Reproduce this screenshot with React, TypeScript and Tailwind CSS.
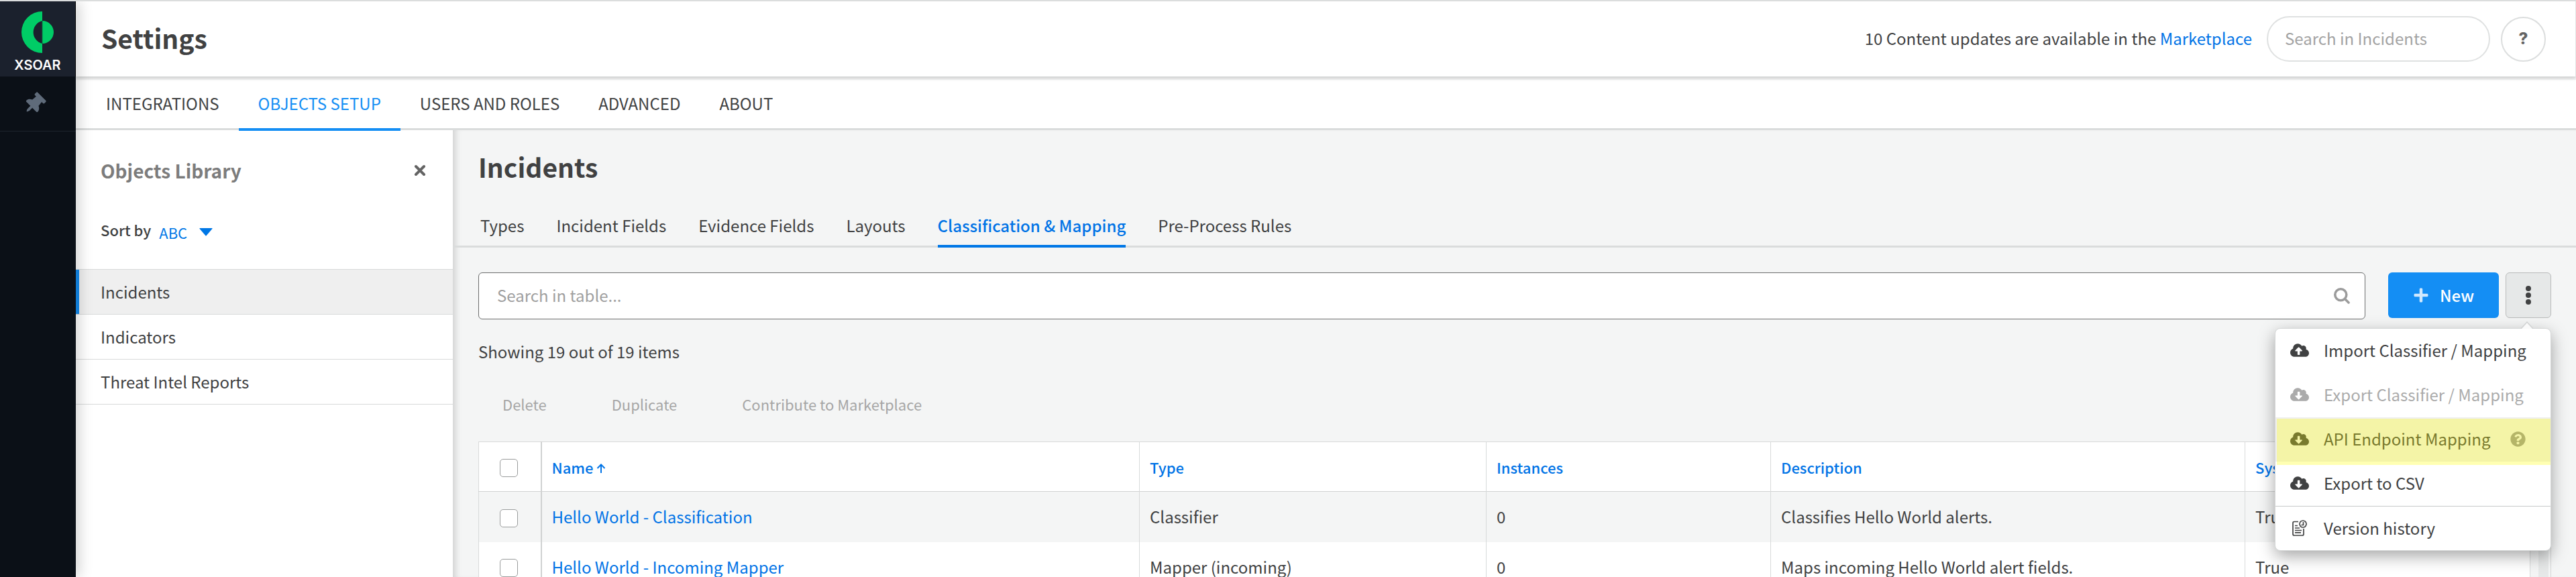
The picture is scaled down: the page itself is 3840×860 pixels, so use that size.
import React from "react";
import { FaCloudUploadAlt, FaCloudDownloadAlt, FaQuestionCircle, FaPlus, FaThumbtack } from "react-icons/fa";

const settingsTabs = ["INTEGRATIONS", "OBJECTS SETUP", "USERS AND ROLES", "ADVANCED", "ABOUT"];
const incidentTabs = ["Types", "Incident Fields", "Evidence Fields", "Layouts", "Classification & Mapping", "Pre-Process Rules"];
const library = ["Incidents", "Indicators", "Threat Intel Reports"];
const bulkActions = ["Delete", "Duplicate", "Contribute to Marketplace"];
const columns = ["Name", "Type", "Instances", "Description", "System"];
const rows = [
  { name: "Hello World - Classification", type: "Classifier", instances: 0, description: "Classifies Hello World alerts.", system: "True" },
  { name: "Hello World - Incoming Mapper", type: "Mapper (incoming)", instances: 0, description: "Maps incoming Hello World alert fields.", system: "True" },
];

function Rail() {
  return (
    <aside className="relative z-20 flex w-[113px] shrink-0 flex-col bg-[#0b1017] shadow-[4px_0_20px_rgba(0,0,0,0.2)]">
      <a href="#home" className="flex h-28 flex-col items-center border-r border-black bg-[#1b212d] pt-[15px] text-white no-underline">
        <svg aria-hidden="true" viewBox="0 0 48 62" className="h-[62px] w-12" fill="#00cc66">
          <path d="M31 0v14a17.500 17.500 0 0 0 0 34v14a31 31 0 0 1 0-62z" />
          <path d="M31 14a17 17 0 0 1 0 34z" />
          <path d="M31 14v34" stroke="#0f6a47" strokeWidth="1" />
        </svg>
        <span className="mt-1.5 font-[Inter] text-[20px] leading-6 font-semibold">XSOAR</span>
      </a>
      <button aria-label="Pin menu" className="flex h-[82px] items-center justify-center border-b border-[#1d242d] pr-3 text-[#5f6b7a]">
        <FaThumbtack className="size-8 rotate-45" />
      </button>
    </aside>
  );
}

function Header() {
  return (
    <header className="relative z-10 flex h-28 items-center border-r border-[#e2e4e4] bg-white pr-11 pl-[38px] shadow-[0_2px_6px_rgba(0,0,0,0.2)]">
      <h1 className="pb-1 text-[39px] leading-[48px] font-bold">Settings</h1>
      <p className="ml-auto pb-0.5">
        10 Content updates are available in the <a href="#marketplace" className="text-[#0073e6]">Marketplace</a>
      </p>
      <input aria-label="Search in Incidents" placeholder="Search in Incidents" className="ml-[22px] h-[68px] w-[333px] rounded-full border-2 border-[#dfe1e1] pr-6 pb-1 pl-[25px] placeholder-[#a3a3a3] outline-none" />
      <button aria-label="Help" className="ml-4 flex size-[67px] items-center justify-center rounded-full border-2 border-[#dcdede] font-[Inter] font-extrabold text-[#646464]">?</button>
    </header>
  );
}

function SettingsTabs() {
  return (
    <nav className="mt-[5px] flex h-[75px] border-b-[3px] border-[#dadcdc] bg-white pl-4">
      {settingsTabs.map((t, i) => (
        <a key={t} href={"#" + t} className={i === 1 ? "z-10 -mb-[4px] flex items-center border-b-4 border-[#148ef4] px-[29px] pb-0.5 text-[#148ef4]" : "flex items-center px-[29px] pb-0.5"}>
          {t}
        </a>
      ))}
    </nav>
  );
}

function Library() {
  return (
    <section className="w-[562px] shrink-0 bg-white">
      <div className="flex h-[120px] items-center justify-between pr-10 pl-[37px]">
        <h2 className="text-[28px] leading-9 font-bold text-[#7c7c7c]">Objects Library</h2>
        <button aria-label="Close library" className="text-[#646464]">
          <svg viewBox="0 0 18 18" className="size-[18px]" stroke="currentColor" strokeWidth="4" strokeLinecap="round"><path d="M3 3l12 12M15 3L3 15" /></svg>
        </button>
      </div>
      <div className="flex h-[87px] items-start gap-3 pt-3 pl-[37px]">
        <span className="text-[22px] font-medium">Sort by</span>
        <button className="flex items-center gap-[18px] pt-1 text-[22px] text-[#0077e6]">
          ABC
          <svg viewBox="0 0 20 12" className="h-3 w-5" fill="currentColor"><path d="M1 0h18q1 0 .4 1L10.800 11q-.8 1-1.600 0L.6 1Q0 0 1 0z" /></svg>
        </button>
      </div>
      <ul className="border-t border-[#d8dada]">
        {library.map((l, i) => (
          <li key={l} className="border-b border-[#d8dada]">
            <a href={"#" + l} className={i === 0 ? "flex h-[66px] items-center border-l-5 border-[#148cf0] bg-[#efefef] pl-8" : "flex h-[66px] items-center pl-[37px]"}>{l}</a>
          </li>
        ))}
      </ul>
    </section>
  );
}

function SearchIcon() {
  return (
    <svg aria-hidden="true" viewBox="0 0 24 24" className="size-6 text-[#9c9c9c]" fill="none" stroke="currentColor" strokeWidth="3.600" strokeLinecap="round">
      <circle cx="10.300" cy="10.300" r="8.500" />
      <path d="M17 17l5 5" />
    </svg>
  );
}

function VersionIcon() {
  return (
    <svg aria-hidden="true" viewBox="0 0 22 24" className="h-6 w-[22px]" fill="none" stroke="currentColor" strokeWidth="1.700">
      <path d="M9 2.500H3Q1 2.500 1 4.500V21q0 2 2 2h12q2 0 2-2v-8" />
      <circle cx="16" cy="6" r="5" />
      <path d="M16.500 3v4.500h-3M4 8.500h4M4 12h7M4 15.500h10M4 18.800h9" />
    </svg>
  );
}

function ActionsMenu() {
  const item = "flex h-[66px] w-full items-center gap-[22px] pb-0.5 pl-[22px] text-left";
  return (
    <div className="absolute top-[83px] right-0 z-30 w-[412px] rounded-lg border border-[#d5d7d7] bg-white shadow-[0_8px_24px_rgba(0,0,0,0.35)]">
      <svg aria-hidden="true" viewBox="0 0 20 12" className="absolute -top-3 right-[25px] h-3 w-5"><path d="M1 12l9-10 9 10" fill="#fafafa" stroke="#d0d2d2" strokeWidth="1.500" /></svg>
      <button className={item}><FaCloudUploadAlt className="size-7" />Import Classifier / Mapping</button>
      <button disabled className={item + " text-[#ababab]"}><FaCloudDownloadAlt className="size-7" />Export Classifier / Mapping</button>
      <div className="relative bg-[#efefef]">
        <button className={item}>
          <FaCloudDownloadAlt className="size-7" />API Endpoint Mapping
          <FaQuestionCircle className="ml-2 size-[23px] text-[#969696]" />
        </button>
        <span className="absolute inset-x-0 top-0.5 -bottom-[5px] ml-0.5 bg-[#ffff00]/30" />
      </div>
      <button className={item}><FaCloudDownloadAlt className="size-7" />Export to CSV</button>
      <button className={item + " border-t border-[#c8caca]"}><span className="flex w-7 justify-center"><VersionIcon /></span>Version history</button>
    </div>
  );
}

function MappingTable() {
  const check = "mt-1 block size-[27px] appearance-none rounded-[5px] border border-[#9a9c9c] bg-white";
  return (
    <div className="mr-[37px] flex border-r border-[#d5d7d7]">
      <div className="flex-1 pr-3">
        <table className="w-full table-fixed border-collapse border border-[#d8dada] bg-white text-left leading-7">
          <colgroup>
            <col className="w-[93px]" />
            <col className="w-[892px]" />
            <col className="w-[517px]" />
            <col className="w-[424px]" />
            <col className="w-[707px]" />
            <col />
          </colgroup>
          <thead>
            <tr className="h-[74px] border-b border-[#d0d2d2]">
              <th className="border-r-2 border-[#d0d2d2] pl-[31px]"><input type="checkbox" aria-label="Select all" className={check} /></th>
              {columns.map((c, i) => (
                <th key={c} className="border-r border-[#d8dada] pl-[15px] text-[22px] font-medium text-[#0073e6]">
                  <button className="flex items-center gap-1">
                    {c}
                    {i === 0 && <svg aria-hidden="true" viewBox="0 0 14 14" className="mt-1 size-3.5" fill="none" stroke="currentColor" strokeWidth="2"><path d="M7 14V2M1.500 7L7 1.500 12.500 7" /></svg>}
                  </button>
                </th>
              ))}
            </tr>
          </thead>
          <tbody>
            {rows.map((r) => (
              <tr key={r.name} className="h-[75px] odd:bg-[#f4f5f5]">
                <td className="border-r-2 border-[#d0d2d2] pl-[31px]"><input type="checkbox" aria-label={"Select " + r.name} className={check} /></td>
                <td className="border-r border-[#d8dada] pl-[15px]"><a href="#mapper" className="text-[#0073e6]">{r.name}</a></td>
                <td className="border-r border-[#d8dada] pl-[15px]">{r.type}</td>
                <td className="border-r border-[#d8dada] pl-[15px]">{r.instances}</td>
                <td className="border-r border-[#d8dada] pl-[15px]">{r.description}</td>
                <td className="pl-[15px]">{r.system}</td>
              </tr>
            ))}
          </tbody>
        </table>
      </div>
      <div className="mr-[3px] w-[15px] bg-[#e6e8e8]" />
    </div>
  );
}

export default function App() {
  return (
    <div className="flex h-screen overflow-hidden border-t-2 border-[#dbdddd] bg-[#f4f5f5] font-['Noto_Sans_CJK_SC',sans-serif] text-[24px] leading-8 text-[#404142]">
      <Rail />
      <div className="flex min-w-0 flex-1 flex-col">
        <Header />
        <SettingsTabs />
        <div className="flex min-h-0 flex-1">
          <Library />
          <main className="min-w-0 flex-1 shadow-[inset_10px_0_10px_-6px_rgba(0,0,0,0.15)]">
            <h2 className="pt-[30px] pl-[38px] text-[39px] leading-[48px] font-bold">Incidents</h2>
            <nav className="mt-[42px] flex h-[55px] gap-12 border-b-[3px] border-[#dadcdc] pl-[41px]">
              {incidentTabs.map((t, i) => (
                <a key={t} href={"#" + t} className={i === 4 ? "-mb-[3px] border-b-4 border-[#0077e6] pt-1.5 font-medium text-[#0073e6]" : "pt-1.5"}>{t}</a>
              ))}
            </nav>
            <div className="relative mt-[37px] mr-[37px] ml-[38px] flex">
              <label className="flex h-[70px] flex-1 items-center rounded-md border border-[#6b6d6d] bg-white pr-[22px] pl-[27px]">
                <input aria-label="Search in table" placeholder="Search in table..." className="min-w-0 flex-1 pb-0.5 placeholder-[#a0a0a0] outline-none" />
                <SearchIcon />
              </label>
              <button className="ml-[34px] flex h-[68px] w-[165px] items-center justify-center gap-4 rounded-md bg-[#148ef4] font-medium text-white">
                <FaPlus className="size-6 text-white/80" />New
              </button>
              <button aria-label="More actions" className="ml-2.5 flex size-[68px] items-center justify-center rounded-md border border-[#babcbc] bg-[#e6e8e8]">
                <svg viewBox="0 0 8 28" className="h-7 w-2" fill="currentColor"><circle cx="4" cy="4" r="4" /><circle cx="4" cy="14" r="4" /><circle cx="4" cy="24" r="4" /></svg>
              </button>
              <ActionsMenu />
            </div>
            <p className="mt-8 ml-[38px]">Showing 19 out of 19 items</p>
            <div className="mt-[46px] ml-[74px] flex gap-[97px] text-[22px] text-[#a6a6a6]">
              {bulkActions.map((b) => <button key={b} disabled>{b}</button>)}
            </div>
            <div className="mt-10 ml-[38px]"><MappingTable /></div>
          </main>
        </div>
      </div>
    </div>
  );
}
